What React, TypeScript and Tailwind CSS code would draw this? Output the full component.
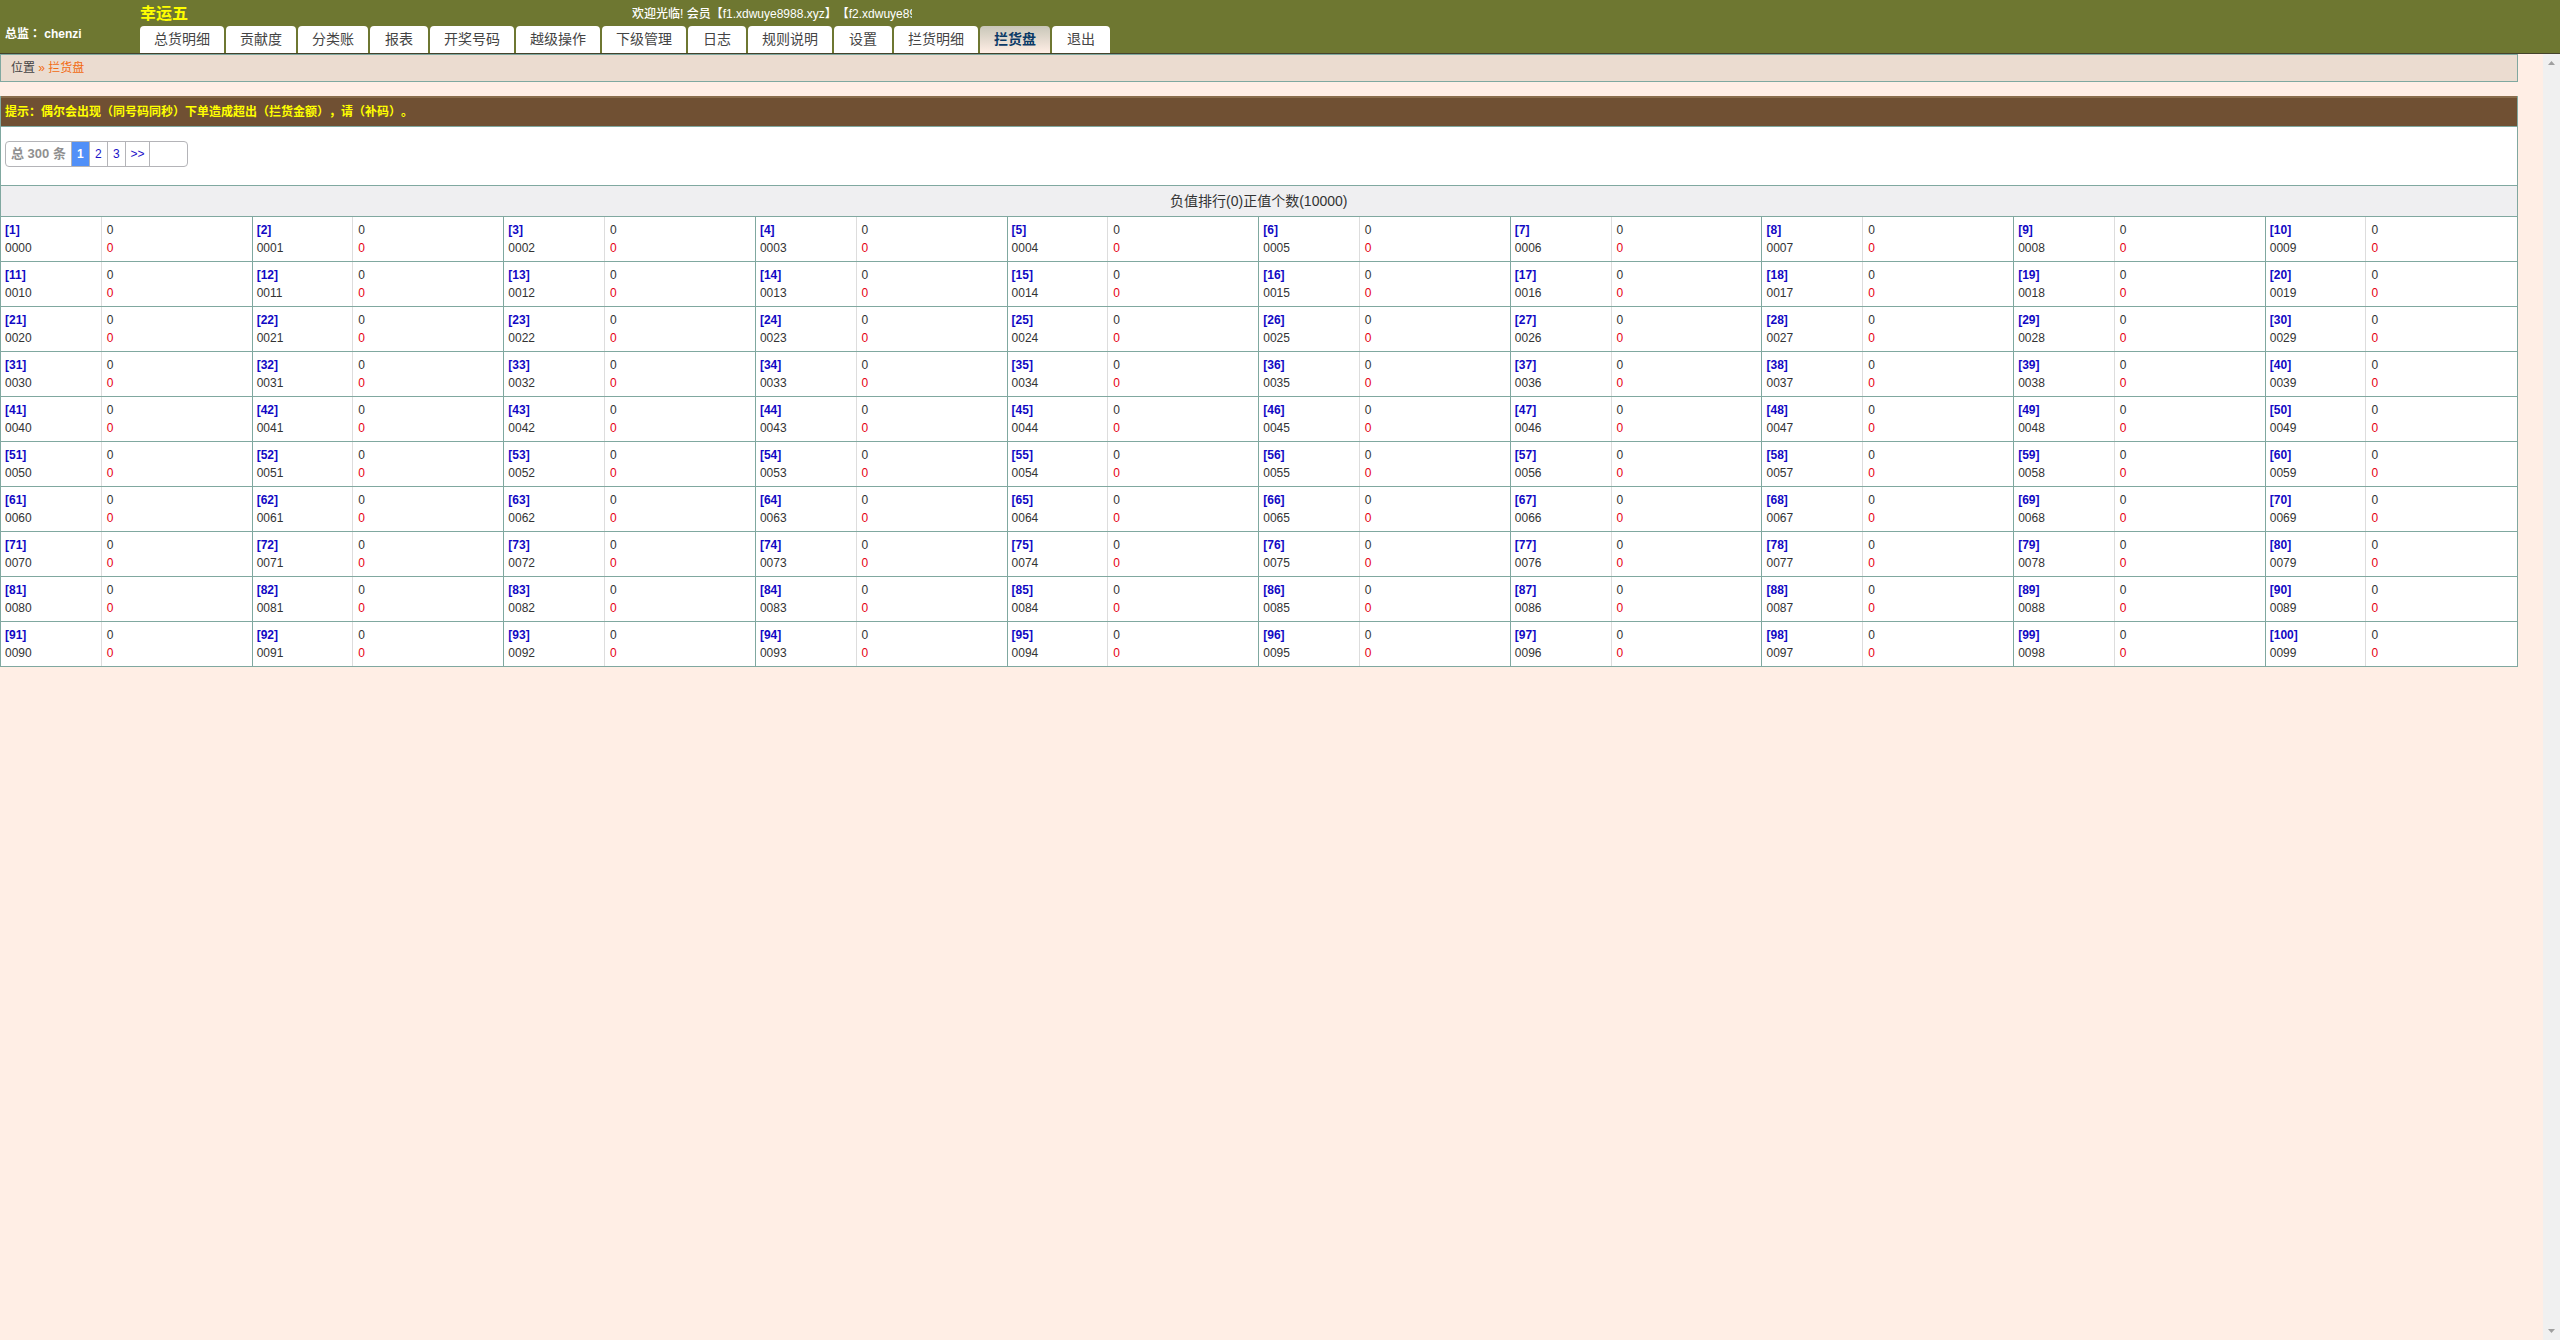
import React from "react";

const tabs = [
    "总货明细", "贡献度", "分类账", "报表", "开奖号码", "越级操作", "下级管理",
    "日志", "规则说明", "设置", "拦货明细", "拦货盘", "退出",
];
const activeTab = "拦货盘";

const rows = Array.from({ length: 10 }, (_, r) => Array.from({ length: 10 }, (_, c) => r * 10 + c));

function Header() {
    return (
        <header className="flex h-[54px] border-b border-[#45432c] bg-[#6e7731]">
            <div className="w-[140px] shrink-0 pl-[5px] pt-[25px] text-xs font-bold text-white">
                总监<span lang="zh-Hant" className="font-['Noto_Sans_CJK_TC',sans-serif]">：</span> chenzi
            </div>
            <div className="flex flex-col">
                <div className="flex h-[26px] items-center pt-[2px]">
                    <h1 className="w-[492px] text-base font-bold text-[#ffff00]">幸运五</h1>
                    <div className="w-[280px] overflow-hidden whitespace-nowrap text-xs font-medium text-white">
                        欢迎光临! 会员【f1.xdwuye8988.xyz】【f2.xdwuye89
                    </div>
                </div>
                <nav className="flex gap-[2px]">
                    {tabs.map((tab) => (
                        <a
                            key={tab}
                            href="#"
                            className={
                                tab === activeTab
                                    ? "h-[27px] min-w-[58px] rounded-t px-[14px] text-center text-sm leading-[27px] font-bold text-[#0b3a66] bg-linear-to-b from-[#c9c7b9] to-[#ffeee5]"
                                    : "h-[27px] min-w-[58px] rounded-t px-[14px] text-center text-sm leading-[27px] text-[#444444] bg-white"
                            }
                        >
                            {tab}
                        </a>
                    ))}
                </nav>
            </div>
        </header>
    );
}

function Pager() {
    return (
        <div className="flex h-[58px] items-center pl-1 pb-1">
            <div className="flex h-[26px] divide-x divide-[#b4b4b8] overflow-hidden rounded border border-[#b4b4b8] leading-6">
                <span className="px-[5px] text-[13px] font-bold text-[#909090]">总 300 条</span>
                <a href="#" className="w-[18px] bg-[#5190f8] text-center text-xs leading-6 font-bold text-white">1</a>
                <a href="#" className="w-[18px] text-center text-xs leading-6 text-[#1a12c8]">2</a>
                <a href="#" className="w-[18px] text-center text-xs leading-6 text-[#1a12c8]">3</a>
                <a href="#" className="w-6 text-center text-xs leading-6 text-[#1a12c8]">&gt;&gt;</a>
                <input type="text" aria-label="页码" className="w-[37px] px-1 text-xs outline-none" />
            </div>
        </div>
    );
}

function RankTable() {
    return (
        <table className="w-full table-fixed border-collapse border border-[#80a8a0] bg-white text-xs leading-[18px] text-[#333333]">
            <colgroup>
                {rows[0].map((n) => (
                    <React.Fragment key={n}>
                        <col className="w-[4%]" />
                        <col className="w-[6%]" />
                    </React.Fragment>
                ))}
            </colgroup>
            <thead>
                <tr className="h-[31px]">
                    <th colSpan={20} className="border border-[#80a8a0] bg-[#efeff1] text-sm font-normal">
                        负值排行(0)正值个数(10000)
                    </th>
                </tr>
            </thead>
            <tbody>
                {rows.map((row) => (
                    <tr key={row[0]} className="h-[45px]">
                        {row.map((n) => (
                            <React.Fragment key={n}>
                                <td className="border border-[#80a8a0] border-r-[#dddddd] px-1">
                                    <b className="block text-[#1108c4]">[{n + 1}]</b>
                                    {String(n).padStart(4, "0")}
                                </td>
                                <td className="border border-[#80a8a0] border-l-[#dddddd] px-[5px]">
                                    0
                                    <span className="block text-[#e60012]">0</span>
                                </td>
                            </React.Fragment>
                        ))}
                    </tr>
                ))}
            </tbody>
        </table>
    );
}

function ScrollBar() {
    return (
        <div className="flex w-[17px] shrink-0 flex-col items-center justify-between bg-[#f0f0f0] py-[7px]">
            <svg width="7" height="4" viewBox="0 0 7 4" fill="#a0a0a0"><path d="M0 4 3.5 0 7 4Z" /></svg>
            <svg width="7" height="4" viewBox="0 0 7 4" fill="#a0a0a0"><path d="M0 0 3.5 4 7 0Z" /></svg>
        </div>
    );
}

export default function App() {
    return (
        <div
            lang="zh-CN"
            className="flex min-h-screen flex-col bg-[#ffeee5] font-['Liberation_Sans','Noto_Sans_CJK_SC',sans-serif] [text-spacing-trim:space-all]"
        >
            <Header />
            <div className="flex grow">
                <main className="grow">
                    <div className="w-[99%]">
                        <div className="mb-[14px] h-7 border border-[#80a8a0] bg-[#ebdcd0] px-[10px] text-xs leading-[26px] text-[#444444]">
                            位置 <span className="text-[#f26a10]">» 拦货盘</span>
                        </div>
                        <section className="border-x border-[#80a8a0] bg-white">
                            <p className="h-[31px] border-t-2 border-b border-t-[#8a6d4c] border-b-[#80a8a0] bg-[#705033] pl-1 text-xs leading-7 font-bold text-[#ffff00]">
                                提示：偶尔会出现（同号码同秒）下单造成超出（拦货金额），请（补码）。
                            </p>
                            <Pager />
                        </section>
                        <RankTable />
                    </div>
                </main>
                <ScrollBar />
            </div>
        </div>
    );
}
